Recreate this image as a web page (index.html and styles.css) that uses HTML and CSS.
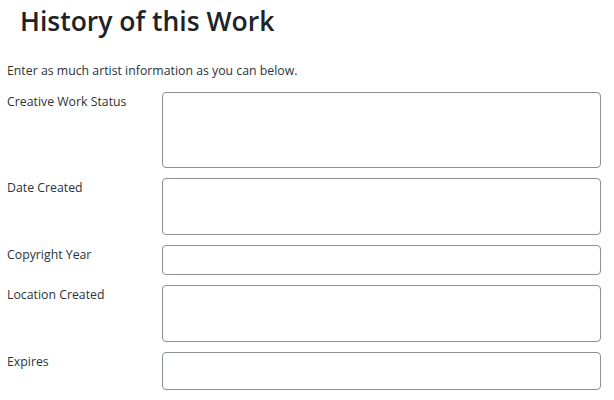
FILE: index.html
```html
<!DOCTYPE html>
<html>
<head>
<meta charset="utf-8">
<link rel="stylesheet" href="styles.css">
</head>
<body>
<div class="page">
  <h1 class="title">History of this Work</h1>
  <p class="intro">Enter as much artist information as you can below.</p>
  <div class="form">
    <label class="label">Creative Work Status</label>
    <textarea class="field h76"></textarea>
    <label class="label">Date Created</label>
    <textarea class="field h57"></textarea>
    <label class="label">Copyright Year</label>
    <input class="field h30" type="text">
    <label class="label">Location Created</label>
    <textarea class="field h57"></textarea>
    <label class="label">Expires</label>
    <input class="field h38" type="text">
  </div>
</div>
</body>
</html>
```

FILE: styles.css
```css
* { box-sizing: border-box; }
html, body { margin: 0; padding: 0; background: #fff; }
body {
  font-family: "Open Sans", "Noto Sans", sans-serif;
  color: #2c3338;
  font-size: 12.3px;
}
.page {
  padding: 0 13px 0 7px;
}
.title {
  margin: 0;
  padding: 3px 0 0 13px;
  font-size: 26.5px;
  font-weight: 600;
  line-height: 36px;
  color: #1d2327;
}
.intro {
  margin: 24px 0 0;
  line-height: 16px;
  font-size: 12.3px;
}
.form {
  margin-top: 13px;
  display: grid;
  grid-template-columns: 155px 1fr;
  row-gap: 10px;
}
.label {
  font-size: 12.3px;
  line-height: 16px;
  padding-top: 2px;
}
.field {
  display: block;
  width: 100%;
  border: 1px solid #8c8f94;
  border-radius: 4px;
  background: #fff;
  resize: none;
  margin: 0;
  padding: 0;
  font: inherit;
}
.h76 { height: 76px; }
.h57 { height: 57px; }
.h30 { height: 30px; }
.h38 { height: 38px; }
```
